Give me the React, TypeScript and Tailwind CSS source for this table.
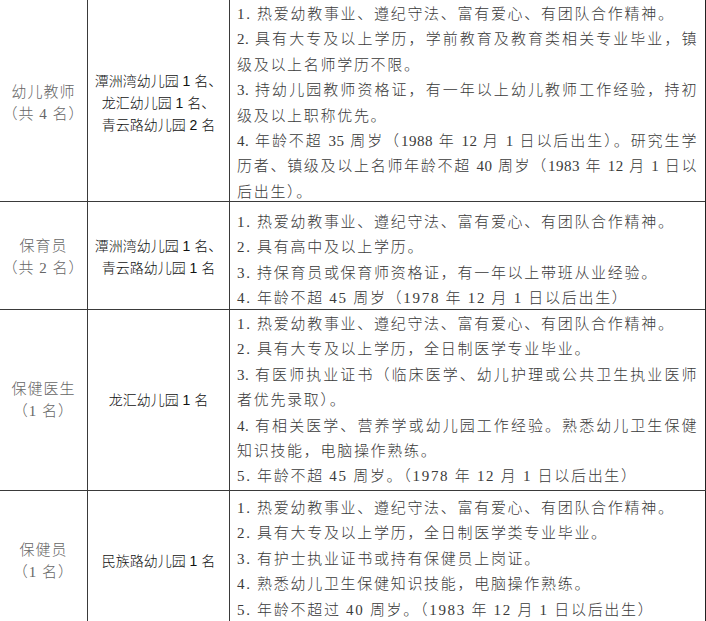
type Row = {
  title: string;
  count: string;
  places: string[];
  lines: { text: string; full?: boolean }[];
  height: string;
  pad: string;
};

const rows: Row[] = [
  {
    title: "幼儿教师",
    count: "（共 4 名）",
    places: ["潭洲湾幼儿园 1 名、", "龙汇幼儿园 1 名、", "青云路幼儿园 2 名"],
    lines: [
      { text: "1. 热爱幼教事业、遵纪守法、富有爱心、有团队合作精神。" },
      { text: "2. 具有大专及以上学历，学前教育及教育类相关专业毕业，镇", full: true },
      { text: "级及以上名师学历不限。" },
      { text: "3. 持幼儿园教师资格证，有一年以上幼儿教师工作经验，持初", full: true },
      { text: "级及以上职称优先。" },
      { text: "4. 年龄不超 35 周岁（1988 年 12 月 1 日以后出生）。研究生学", full: true },
      { text: "历者、镇级及以上名师年龄不超 40 周岁（1983 年 12 月 1 日以", full: true },
      { text: "后出生）。" },
    ],
    height: "h-[202px]",
    pad: "pt-[2px]",
  },
  {
    title: "保育员",
    count: "（共 2 名）",
    places: ["潭洲湾幼儿园 1 名、", "青云路幼儿园 1 名"],
    lines: [
      { text: "1. 热爱幼教事业、遵纪守法、富有爱心、有团队合作精神。" },
      { text: "2. 具有高中及以上学历。" },
      { text: "3. 持保育员或保育师资格证，有一年以上带班从业经验。" },
      { text: "4. 年龄不超 45 周岁（1978 年 12 月 1 日以后出生）" },
    ],
    height: "h-[108px]",
    pad: "pt-[8px]",
  },
  {
    title: "保健医生",
    count: "（1 名）",
    places: ["龙汇幼儿园 1 名"],
    lines: [
      { text: "1. 热爱幼教事业、遵纪守法、富有爱心、有团队合作精神。" },
      { text: "2. 具有大专及以上学历，全日制医学专业毕业。" },
      { text: "3. 有医师执业证书（临床医学、幼儿护理或公共卫生执业医师", full: true },
      { text: "者优先录取）。" },
      { text: "4. 有相关医学、营养学或幼儿园工作经验。熟悉幼儿卫生保健", full: true },
      { text: "知识技能，电脑操作熟练。" },
      { text: "5. 年龄不超 45 周岁。（1978 年 12 月 1 日以后出生）" },
    ],
    height: "h-[181px]",
    pad: "pt-[2px]",
  },
  {
    title: "保健员",
    count: "（1 名）",
    places: ["民族路幼儿园 1 名"],
    lines: [
      { text: "1. 热爱幼教事业、遵纪守法、富有爱心、有团队合作精神。" },
      { text: "2. 具有大专及以上学历，全日制医学类专业毕业。" },
      { text: "3. 有护士执业证书或持有保健员上岗证。" },
      { text: "4. 熟悉幼儿卫生保健知识技能，电脑操作熟练。" },
      { text: "5. 年龄不超过 40 周岁。（1983 年 12 月 1 日以后出生）" },
    ],
    height: "h-[140px]",
    pad: "pt-[5px]",
  },
];

export default function App() {
  return (
    <div className="w-[706px] h-[621px] overflow-hidden bg-white">
      {rows.map((row) => (
        <div
          key={row.title}
          className={`grid grid-cols-[88px_142px_476px] border-b border-[#3a3a3a] box-border ${row.height}`}
        >
          {/* position */}
          <div className="flex flex-col items-center justify-center border-r border-[#3a3a3a] text-[15px] leading-[22px] tracking-[1px] text-[#666] font-['Liberation_Serif','Noto_Sans_CJK_SC',serif] font-light">
            <div>{row.title}</div>
            <div>{row.count}</div>
          </div>

          {/* kindergartens */}
          <div className="flex flex-col items-center justify-center border-r border-[#3a3a3a] text-[14px] leading-[22px] text-[#111] font-['Liberation_Sans','Noto_Sans_CJK_SC',sans-serif] font-light">
            {row.places.map((p) => (
              <div key={p}>{p}</div>
            ))}
          </div>

          {/* requirements */}
          <div
            className={`${row.pad} pl-[7px] pr-[8px] text-[15px] leading-[25.4px] text-[#3a3a3a] font-['Liberation_Serif','Noto_Sans_CJK_SC',serif] font-light border-r border-[#222]`}
          >
            {row.lines.map((l, i) => (
              <div
                key={i}
                className={
                  l.full
                    ? "tracking-[0.5px] text-justify [text-align-last:justify]"
                    : "tracking-[1.7px]"
                }
              >
                {l.text}
              </div>
            ))}
          </div>
        </div>
      ))}
    </div>
  );
}
